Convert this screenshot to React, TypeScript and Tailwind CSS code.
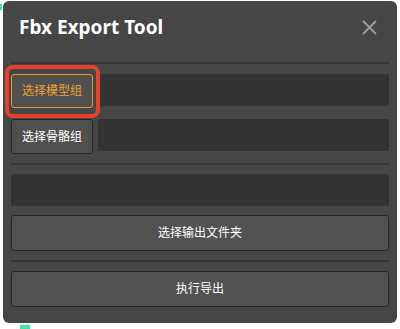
import React from "react";

const font = { fontFamily: '"Noto Sans", "Noto Sans CJK SC", sans-serif' };

export default function App() {
  return (
    <div className="relative w-[400px] h-[329px] bg-white overflow-hidden" style={font}>
      {/* desktop remnants */}
      <div className="absolute left-0 top-[4px] w-[2px] h-[6px] bg-[#3ee6a0]" />
      <div className="absolute left-[20px] top-[325px] w-[10px] h-[4px] bg-[#3ee6a0]" />
      <div className="ml-[3px] mt-px w-[394px] h-[322px] bg-[#464646] rounded-[6px] px-2 flex flex-col">
        <div className="h-[52px] flex items-center justify-between pl-2 pr-[12px]">
          <span className="text-white font-bold text-[19px] leading-none">Fbx Export Tool</span>
          <svg width="15" height="15" viewBox="0 0 15 15">
            <path d="M1 1 L14 14 M14 1 L1 14" stroke="#9c9c9c" strokeWidth="1.8" fill="none" />
          </svg>
        </div>
        <div className="mt-[9px] h-[2px] bg-[#353535]" />
        <div className="mt-[10px] flex gap-[5px] items-start">
          <button className="w-[82px] h-[34px] shrink-0 rounded-[3px] border border-[#e8962a] bg-[#505050] text-[#f0a035] text-[12px]">
            选择模型组
          </button>
          <div className="flex-1 h-[32px] rounded-[2px] bg-[#333333]" />
        </div>
        <div className="mt-[11px] flex gap-[5px] items-start">
          <button className="w-[82px] h-[35px] shrink-0 rounded-[3px] border border-[#262626] bg-[#505050] text-white text-[12px]">
            选择骨骼组
          </button>
          <div className="flex-1 h-[32px] rounded-[2px] bg-[#333333]" />
        </div>
        <div className="mt-[9px] h-[2px] bg-[#353535]" />
        <div className="mt-[9px] h-[32px] rounded-[2px] bg-[#333333]" />
        <button className="mt-[9px] h-[36px] rounded-[3px] border border-[#262626] bg-[#525252] text-white text-[12px]">
          选择输出文件夹
        </button>
        <div className="mt-[9px] h-[2px] bg-[#353535]" />
        <button className="mt-[9px] h-[36px] rounded-[3px] border border-[#262626] bg-[#525252] text-white text-[12px]">
          执行导出
        </button>
      </div>
      {/* annotation highlight */}
      <div className="absolute left-[5px] top-[65px] w-[95px] h-[53px] rounded-[8px] border-[4px] border-[#e8402a]" />
    </div>
  );
}
